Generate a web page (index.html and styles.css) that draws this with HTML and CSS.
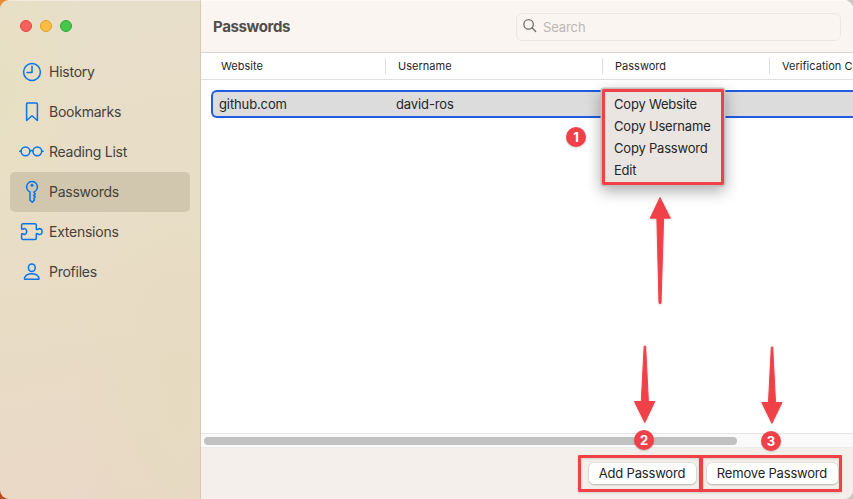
FILE: index.html
```html
<!DOCTYPE html>
<html lang="en">
<head>
<meta charset="utf-8">
<title>Passwords</title>
<link rel="stylesheet" href="styles.css">
</head>
<body>
<div class="window">
  <aside class="sidebar">
    <div class="lights"><i class="light red"></i><i class="light yellow"></i><i class="light green"></i></div>
    <nav class="nav">
      <a class="item"><svg class="icon" viewBox="0 0 24 24"><circle cx="12" cy="12" r="8.4"/><path d="M12 6.2V12.6H7"/></svg><span>History</span></a>
      <a class="item"><svg class="icon" viewBox="0 0 24 24"><path d="M7.3 2.9H16.4Q17.4 2.9 17.4 3.9V20.5L12 15.8L6.6 20.5V3.9Q6.6 2.9 7.3 2.9Z"/></svg><span>Bookmarks</span></a>
      <a class="item"><svg class="icon" viewBox="0 0 24 24"><circle cx="5.5" cy="11.3" r="4.4"/><circle cx="17.3" cy="11.3" r="4.4"/><path d="M-.3 11.2H1M9.9 11.2Q11.4 9.9 12.9 11.2M21.8 11.2H23.2"/></svg><span>Reading List</span></a>
      <a class="item active"><svg class="icon" viewBox="0 0 24 24"><path d="M10 11.9A5.4 5.4 0 1 1 14 11.9V12.6L15.3 14L13.7 15.4L15.3 17L13.8 18.3L14.6 19.8L12.3 22.3L10 20.2Z"/><circle class="dot" cx="12" cy="5.3" r="1.5"/></svg><span>Passwords</span></a>
      <a class="item"><svg class="icon" viewBox="0 0 24 24"><path d="M3 3.7H14.8Q16.3 3.7 16.3 5.2V9.2Q16.8 9.8 17.8 9.3Q19.4 8.1 21 9Q22.1 9.7 22.1 11.5Q22.1 13.4 21 14.1Q19.4 15 17.8 13.8Q16.8 13.3 16.3 13.9V17.9Q16.3 19.4 14.8 19.4H3Q1.6 19.4 1.6 18V14.2Q1.7 13.2 2.8 13.8Q4.4 15 5.7 13.9Q6.7 13.1 6.7 11.5Q6.7 9.9 5.7 9.2Q4.4 8 2.8 9.2Q1.7 9.8 1.6 8.8V5.1Q1.6 3.7 3 3.7Z"/></svg><span>Extensions</span></a>
      <a class="item"><svg class="icon" viewBox="0 0 24 24"><ellipse cx="11.8" cy="7.7" rx="3.4" ry="3.8"/><path d="M5.6 19.3Q4.1 19.3 4.5 17.9C5.4 15.1 8.5 13.7 11.8 13.7S18.1 15.1 19 17.9Q19.4 19.3 17.9 19.3Z"/></svg><span>Profiles</span></a>
    </nav>
  </aside>
  <main class="main">
    <header class="toolbar">
      <h1>Passwords</h1>
      <div class="search"><svg viewBox="0 0 14 14"><circle cx="5.6" cy="5.4" r="4.7"/><path d="M9 8.8L12.7 12.5"/></svg><span>Search</span></div>
    </header>
    <div class="columns"><span class="col">Website</span><span class="col">Username</span><span class="col">Password</span><span class="col">Verification Code</span></div>
    <div class="list">
      <div class="row"><span class="site">github.com</span><span>david-ros</span></div>
    </div>
    <div class="scroll"><div class="thumb"></div></div>
    <footer class="footer"><button class="add">Add Password</button><button class="remove">Remove Password</button></footer>
  </main>
</div>
<div class="menu"><span>Copy Website</span><span>Copy Username</span><span>Copy Password</span><span>Edit</span></div>
<div class="frame frame-add"></div>
<div class="frame frame-remove"></div>
<svg class="arrows" viewBox="0 0 853 499">
  <path d="M660 197.5L670.4 218.2H663.6L661 303.3H659L656.9 218.2H650.2Z"/>
  <path d="M644.2 346H645.6L648.4 401.5H654.8L644.8 422.5L634.4 401.5H641.3Z"/>
  <path d="M771.3 347H772.7L775.5 402.5H782L771.9 423.3L761.8 402.5H768.5Z"/>
</svg>
<b class="badge one">1</b><b class="badge two">2</b><b class="badge three">3</b>
</body>
</html>
```
FILE: styles.css
```css
* { box-sizing: border-box; }
body { margin: 0; width: 853px; height: 499px; overflow: hidden; position: relative; font-family: Inter, "Liberation Sans", sans-serif; background: linear-gradient(90deg, transparent 50%, #c9c7c5 50%), linear-gradient(#e58b32, #b94c1c); }
.window { display: flex; height: 499px; border-radius: 9px; overflow: hidden; }
.sidebar { width: 201px; flex: none; border-right: 1px solid #dac9b0; background: radial-gradient(ellipse at 0 18%, #e7dfc2 0, transparent 30%), radial-gradient(ellipse at 90% 80%, #e6dbc1 0, transparent 40%), linear-gradient(170deg, #e8dfca 0, #e8dcc5 60%, #e9d8c7 100%); border-top: 1px solid #f0eadf; }
.lights { display: flex; gap: 8px; padding: 19px 20px 0; height: 51px; }
.light { width: 12px; height: 12px; border-radius: 50%; border: 1px solid; }
.red { background: #fc605b; border-color: #df4944; }
.yellow { background: #fdbd40; border-color: #dfa034; }
.green { background: #43c84a; border-color: #2faa36; }
.nav { padding: 0 10px; }
.item { display: flex; align-items: center; height: 40px; padding-left: 10px; gap: 5px; border-radius: 5px; color: #454139; font-size: 14px; letter-spacing: -.25px; }
.item span { padding-bottom: 1.5px; }
.item.active { background: #d1c7af; }
.icon { width: 24px; height: 24px; flex: none; overflow: visible; fill: none; stroke: #0874ed; stroke-width: 1.5; stroke-linejoin: round; stroke-linecap: round; }
.icon .dot { fill: #0874ed; stroke: none; }
.main { flex: 1; min-width: 0; display: flex; flex-direction: column; background: #fff; }
.toolbar { height: 53px; flex: none; display: flex; align-items: center; justify-content: space-between; padding: 0 12px; background: #fbf5f1; border-top: 1px solid #fefaf6; border-bottom: 1px solid #d9d5d2; }
h1 { margin: 0; padding-bottom: 1px; font-size: 15px; font-weight: 700; color: #514e4c; letter-spacing: -.36px; }
.search { display: flex; align-items: center; width: 325px; height: 28px; border: 1px solid #ede7e3; border-radius: 6px; padding-left: 6px; gap: 6px; color: #bcb7b4; font-size: 13px; letter-spacing: -.1px; }
.search svg { width: 14px; height: 14px; fill: none; stroke: #706d6a; stroke-width: 1.3; stroke-linecap: round; margin-top: -2px; }
.columns { display: grid; grid-template-columns: 184px 217px 167px 217px; height: 27px; flex: none; align-items: center; border-bottom: 1px solid #dfdfdf; overflow: hidden; font-size: 11px; color: #262626; }
.col { height: 16px; line-height: 16px; padding-left: 12px; border-left: 1px solid #dedede; white-space: nowrap; letter-spacing: .02px; }
.col:first-child { padding-left: 20px; border: 0; }
.list { flex: 1; padding: 10px 0 0 10px; overflow: hidden; }
.row { display: flex; align-items: center; height: 28px; border: 2px solid #205be0; border-right: 0; border-radius: 6px 0 0 6px; background: #dcdcdc; padding-left: 6px; font-size: 13px; color: #252525; letter-spacing: -.12px; }
.site { width: 177px; }
.scroll { height: 15px; flex: none; border-top: 1px solid #e5e5e5; border-bottom: 1px solid #eeeceb; background: #fafafa; padding: 3px; }
.thumb { width: 533px; height: 8px; border-radius: 4px; background: #c1c1c1; }
.footer { height: 51px; flex: none; display: flex; justify-content: flex-end; align-items: flex-start; gap: 11px; padding: 15px 15.5px 0 0; background: #f5efeb; }
button { height: 21px; padding: 0 0 1px; border: 0; border-radius: 5px; background: #fff; color: #232323; font: 13px Inter, sans-serif; letter-spacing: -.19px; white-space: nowrap; box-shadow: 0 0 0 .5px #d4cfcb, 0 1px 1.5px #aaa5a2; }
.add { width: 107px; }
.remove { width: 131px; }
.menu { position: absolute; left: 602px; top: 89px; width: 122px; height: 96px; padding: 1px 9px; display: flex; flex-direction: column; border: 3px solid #f14148; border-radius: 2px; background: #ebe5e2; color: #252525; font-size: 13px; letter-spacing: -.2px; box-shadow: 0 0 0 1.5px #c5c0be, 0 5px 15px 1px #0005; }
.menu span { height: 22px; line-height: 22px; white-space: nowrap; }
.frame { position: absolute; top: 455px; height: 37px; border: 3px solid #f14148; border-radius: 1px; filter: drop-shadow(0 1px 1px #0002); }
.frame-add { left: 578px; width: 124px; }
.frame-remove { left: 700px; width: 142px; }
.arrows { position: absolute; left: 0; top: 0; width: 853px; height: 499px; fill: #f14148; stroke: #f14148; stroke-width: 1; stroke-linejoin: round; filter: drop-shadow(0 1px 1px #0002); }
.badge { position: absolute; width: 20px; height: 20px; border-radius: 50%; background: #f14148; color: #fff; font-size: 13px; line-height: 20px; text-align: center; box-shadow: 0 1px 2px #0003; }
.one { left: 566px; top: 127px; }
.two { left: 634px; top: 430px; }
.three { left: 761px; top: 431px; }
```
